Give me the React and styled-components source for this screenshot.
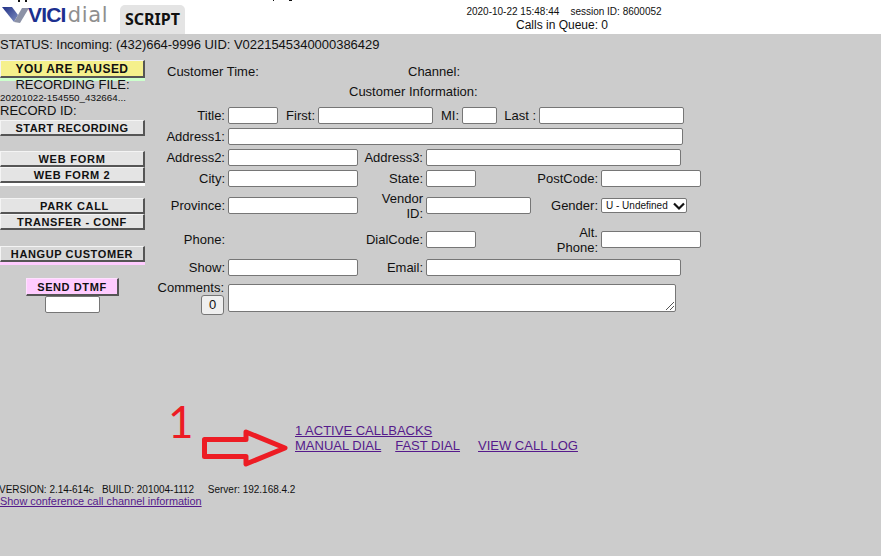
import React from 'react';
import styled, { createGlobalStyle } from 'styled-components';

const Global = createGlobalStyle`
  html, body { margin: 0; padding: 0; height: 100%; }
  body { background: #cccccc; font-family: "Liberation Sans", Arial, sans-serif; overflow: hidden; }
  #root { height: 100%; }
`;

const Page = styled.div`
  position: relative;
  width: 881px;
  height: 556px;
  overflow: hidden;
  color: #111;
`;

const Header = styled.header`
  height: 34px;
  background: #fff;
  display: flex;
  align-items: flex-end;
`;

const Speck = styled.span`
  position: absolute;
  top: 0;
  left: ${p => p.$x}px;
  width: ${p => p.$w || 1}px;
  height: ${p => p.$h || 1}px;
  background: #111;
`;

const Logo = styled.div`
  width: 120px;
  height: 34px;
  display: flex;
  align-items: center;
  padding: 0 0 4px 2px;
  box-sizing: border-box;
  font-size: 21px;
  white-space: nowrap;
`;

const LogoVici = styled.span`
  color: #1c2f8f;
  font-weight: 700;
  letter-spacing: -0.8px;
  margin-left: -1px;
`;

const LogoDial = styled.span`
  color: #8f8f8f;
  font-family: "DejaVu Sans", sans-serif;
  letter-spacing: 0.7px;
  margin-left: 2px;
`;

const ScriptTab = styled.div`
  width: 65px;
  height: 29px;
  background: #e4e4e4;
  border-radius: 5px 5px 0 0;
  font-family: "Noto Sans", sans-serif;
  font-weight: 700;
  font-size: 16px;
  line-height: 29px;
  text-align: center;
  color: #111;
`;

const HeaderInfo = styled.div`
  margin-left: 281px;
  width: 196px;
  height: 34px;
  padding-top: 6px;
  box-sizing: border-box;
  text-align: center;
  white-space: nowrap;
`;

const Stamp = styled.div`
  font-size: 10px;
  line-height: 12px;
  white-space: pre;
`;

const Queue = styled.div`
  font-size: 12px;
  line-height: 14px;
  margin-right: 4px;
`;

const StatusBar = styled.div`
  height: 24px;
  line-height: 22px;
  font-size: 13px;
  letter-spacing: -0.03px;
  white-space: nowrap;
`;

const Body = styled.div`
  display: flex;
`;

const Side = styled.aside`
  width: 145px;
  flex: none;
  padding-top: 2px;
  display: flex;
  flex-direction: column;
  align-items: center;
`;

const Action = styled.div`
  width: 145px;
  height: ${p => p.$h || 16}px;
  box-sizing: border-box;
  margin-top: ${p => p.$top || 0}px;
  padding-left: ${p => p.$shift || 0}px;
  background: ${p => p.$bg || '#e4e4e4'};
  border-top: 1px solid #f4f4f4;
  border-left: 1px solid #f4f4f4;
  border-right: 2px solid #555;
  border-bottom: 2px solid #555;
  font-size: ${p => p.$fs || 11}px;
  font-weight: 700;
  letter-spacing: ${p => p.$ls || 0.6}px;
  line-height: ${p => (p.$h || 16) - 2}px;
  text-align: center;
  white-space: nowrap;
  color: #111;
  box-shadow: 0 ${p => p.$under ? 3 : 0}px 0 ${p => p.$under || 'transparent'};
`;

const SideText = styled.div`
  font-size: 13px;
  line-height: 13px;
  width: 145px;
  text-align: ${p => p.$align || 'center'};
  white-space: nowrap;
`;

const SideTiny = styled.div`
  font-size: 9.8px;
  line-height: 13px;
  width: 145px;
  white-space: nowrap;
`;

const DtmfButton = styled(Action)`
  width: 93px;
  background: #ffccff;
  border-top-color: #ffe0ff;
  border-left-color: #ffe0ff;
`;

const DtmfInput = styled.div`
  width: 55px;
  height: 17px;
  box-sizing: border-box;
  background: #fff;
  border: 1px solid #767676;
  border-radius: 2px;
`;

const Form = styled.main`
  flex: none;
  width: 736px;
  padding-top: 2px;
  font-size: 13px;
  display: flex;
  flex-direction: column;
`;

const Row = styled.div`
  display: flex;
  align-items: ${p => p.$align || 'center'};
  height: ${p => p.$h}px;
  margin-top: ${p => p.$top || 0}px;
`;

const Label = styled.div`
  flex: none;
  width: ${p => p.$w}px;
  padding-right: 3px;
  box-sizing: border-box;
  text-align: right;
  line-height: 15px;
`;

const Field = styled.div`
  flex: none;
  width: ${p => p.$w}px;
  height: ${p => p.$h || 17}px;
  box-sizing: border-box;
  background: #fff;
  border: 1px solid #767676;
  border-radius: 2px;
`;

const Note = styled.div`
  flex: none;
  width: ${p => p.$w}px;
`;

const Select = styled.div`
  flex: none;
  width: 86px;
  height: 15px;
  box-sizing: border-box;
  background: #fff;
  border: 1px solid #767676;
  border-radius: 2px;
  font-size: 10px;
  line-height: 13px;
  padding-left: 4px;
  display: flex;
  justify-content: space-between;
  align-items: center;
  white-space: nowrap;
`;

const CountBox = styled.div`
  width: 23px;
  height: 20px;
  margin: 0 0 0 auto;
  box-sizing: border-box;
  background: #efefef;
  border: 1px solid #767676;
  border-radius: 3px;
  text-align: center;
  line-height: 18px;
`;

const CommentLabel = styled.div`
  flex: none;
  width: 83px;
  padding: 2px 4px 0 0;
  box-sizing: border-box;
  text-align: right;
  line-height: 15px;
`;

const TextArea = styled(Field)`
  position: relative;
  margin-top: 6px;
`;

const Grip = styled.svg`
  position: absolute;
  right: 0;
  bottom: 0;
`;

const Links = styled.nav`
  margin: 105px 0 0 150px;
  font-size: 13px;
  line-height: 15px;
`;

const LinkRow = styled.div`
  display: flex;
`;

const Anchor = styled.a`
  color: #551a8b;
  text-decoration: underline;
  white-space: nowrap;
  margin-right: ${p => p.$mr || 0}px;
`;

const Footer = styled.footer`
  margin-top: 31px;
  font-size: 10px;
  line-height: 12px;
  white-space: pre;
`;

const Version = styled.div`
  margin-left: -1px;
  letter-spacing: -0.02px;
`;

const FooterLink = styled(Anchor)`
  display: block;
  font-size: 10.9px;
  line-height: 11px;
`;

const Number1 = styled.div`
  position: absolute;
  left: 168px;
  top: 396px;
  color: #ed1c24;
  font-family: Lato, sans-serif;
  font-size: 44px;
  line-height: 50px;
`;

const Arrow = styled.svg`
  position: absolute;
  left: 200px;
  top: 428px;
`;

export default function App() {
  return (
    <Page>
      <Global />
      <Speck $x={18} $w={2} $h={2} />
      <Speck $x={25} $w={2} $h={2} />
      <Speck $x={273} />
      <Speck $x={289} $w={3} />
      <Header>
        <Logo>
          <svg width="27" height="20" viewBox="0 0 27 20">
            <defs>
              <linearGradient id="mark" x1="0" y1="0" x2="1" y2="1">
                <stop offset="0" stopColor="#1f2f86" />
                <stop offset="1" stopColor="#7f8fc0" />
              </linearGradient>
            </defs>
            <path d="M0 2 L10 2 L16 10 L12 17 Z" fill="url(#mark)" />
            <path d="M12 17 L16 10 L20 3 L27 3 L18 18 Z" fill="#8c92a6" />
          </svg>
          <LogoVici>VICI</LogoVici>
          <LogoDial>dial</LogoDial>
        </Logo>
        <ScriptTab>SCRIPT</ScriptTab>
        <HeaderInfo>
          <Stamp>2020-10-22 15:48:44    session ID: 8600052</Stamp>
          <Queue>Calls in Queue: 0</Queue>
        </HeaderInfo>
      </Header>
      <StatusBar>STATUS: Incoming: (432)664-9996 UID: V0221545340000386429</StatusBar>
      <Body>
        <Side>
          <Action $h={18} $fs={12} $ls={0.45} $bg="#f5f08c" $under="#ccffcc">YOU ARE PAUSED</Action>
          <SideText>RECORDING FILE:</SideText>
          <SideTiny>20201022-154550_432664...</SideTiny>
          <SideText $align="left">RECORD ID:</SideText>
          <Action $top={3} $ls={0.45}>START RECORDING</Action>
          <Action $top={15} $ls={0.75}>WEB FORM</Action>
          <Action $under="#ffffff" $ls={0.6}>WEB FORM 2</Action>
          <Action $top={15} $shift={5} $ls={0.7}>PARK CALL</Action>
          <Action>TRANSFER - CONF</Action>
          <Action $top={16} $bg="#d8d8d8" $under="#ffccff">HANGUP CUSTOMER</Action>
          <DtmfButton $top={16} $h={18}>SEND DTMF</DtmfButton>
          <DtmfInput />
        </Side>
        <Form>
          <Row $h={22}>
            <Note $w={22} />
            <Note $w={241}>Customer Time:</Note>
            <Note $w={60}>Channel:</Note>
          </Row>
          <Row $h={18}>
            <Note $w={204} />
            <Note $w={150}>Customer Information:</Note>
          </Row>
          <Row $h={21} $top={5}>
            <Label $w={83}>Title:</Label>
            <Field $w={50} />
            <Label $w={40}>First:</Label>
            <Field $w={115} />
            <Label $w={29}>MI:</Label>
            <Field $w={35} />
            <Label $w={42}>Last :</Label>
            <Field $w={145} />
          </Row>
          <Row $h={21}>
            <Label $w={83}>Address1:</Label>
            <Field $w={455} />
          </Row>
          <Row $h={21}>
            <Label $w={83}>Address2:</Label>
            <Field $w={130} />
            <Label $w={68}>Address3:</Label>
            <Field $w={255} />
          </Row>
          <Row $h={21}>
            <Label $w={83}>City:</Label>
            <Field $w={130} />
            <Label $w={68}>State:</Label>
            <Field $w={50} />
            <Label $w={125}>PostCode:</Label>
            <Field $w={100} />
          </Row>
          <Row $h={33}>
            <Label $w={83}>Province:</Label>
            <Field $w={130} />
            <Label $w={68}>Vendor<br />ID:</Label>
            <Field $w={105} />
            <Label $w={70}>Gender:</Label>
            <Select>
              U - Undefined
              <svg width="14" height="12" viewBox="0 0 14 12">
                <path d="M2 3.5 L7 8.5 L12 3.5" fill="none" stroke="#111" strokeWidth="2.2" />
              </svg>
            </Select>
          </Row>
          <Row $h={35}>
            <Label $w={83}>Phone:</Label>
            <Note $w={130} />
            <Label $w={68}>DialCode:</Label>
            <Field $w={50} />
            <Label $w={125}>Alt.<br />Phone:</Label>
            <Field $w={100} />
          </Row>
          <Row $h={21}>
            <Label $w={83}>Show:</Label>
            <Field $w={130} />
            <Label $w={68}>Email:</Label>
            <Field $w={255} />
          </Row>
          <Row $h={40} $align="flex-start">
            <CommentLabel>
              Comments:
              <CountBox>0</CountBox>
            </CommentLabel>
            <TextArea $w={448} $h={28}>
              <Grip width="11" height="11" viewBox="0 0 11 11">
                <path d="M2 10 L10 2 M6 10 L10 6" stroke="#555" strokeWidth="1" />
              </Grip>
            </TextArea>
          </Row>
          <Links>
            <LinkRow><Anchor>1 ACTIVE CALLBACKS</Anchor></LinkRow>
            <LinkRow>
              <Anchor $mr={14}>MANUAL DIAL</Anchor>
              <Anchor $mr={18}>FAST DIAL</Anchor>
              <Anchor>VIEW CALL LOG</Anchor>
            </LinkRow>
          </Links>
        </Form>
      </Body>
      <Footer>
        <Version>{'VERSION: 2.14-614c   BUILD: 201004-1112     Server: 192.168.4.2'}</Version>
        <FooterLink>Show conference call channel information</FooterLink>
      </Footer>
      <Number1>1</Number1>
      <Arrow width="92" height="42" viewBox="0 0 92 42">
        <path d="M4.5 11.5 H46 V4 L85 20 L46 36 V28.5 H4.5 Z" fill="none" stroke="#ed1c24" strokeWidth="5" strokeLinejoin="round" />
      </Arrow>
    </Page>
  );
}
